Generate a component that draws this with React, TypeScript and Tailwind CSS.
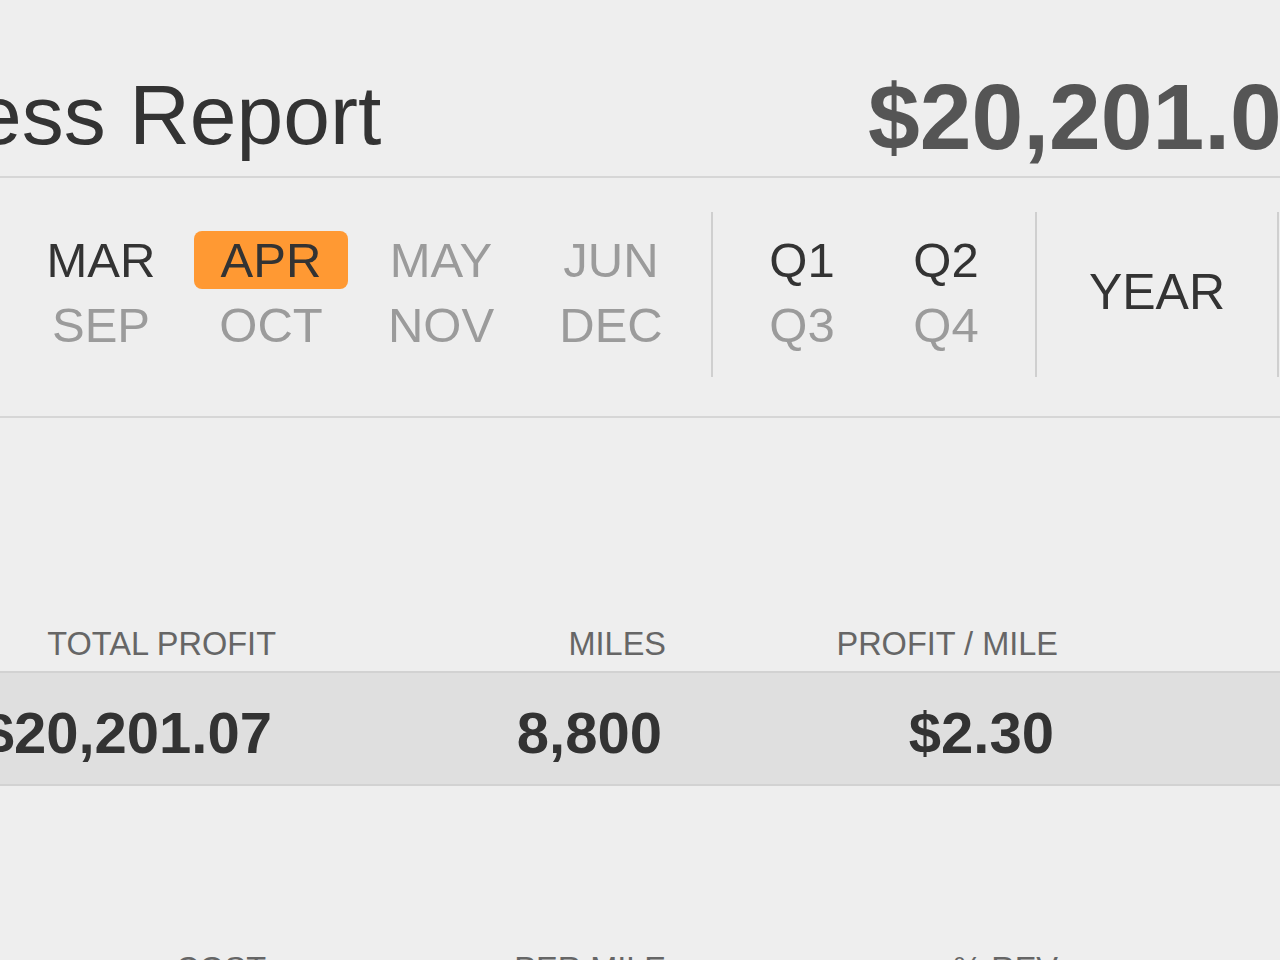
import React from 'react';

const monthRows = [
  ['JAN', 'FEB', 'MAR', 'APR', 'MAY', 'JUN'],
  ['JUL', 'AUG', 'SEP', 'OCT', 'NOV', 'DEC'],
];
const doneMonths = ['JAN', 'FEB', 'MAR', 'APR'];
const activeMonth = 'APR';

const quarterRows = [
  ['Q1', 'Q2'],
  ['Q3', 'Q4'],
];
const doneQuarters = ['Q1', 'Q2'];

const stats = [
  { label: 'TOTAL PROFIT', value: '$20,201.07' },
  { label: 'MILES', value: '8,800' },
  { label: 'PROFIT / MILE', value: '$2.30' },
];

const costLabels = ['COST', 'PER MILE', '% REV'];

function Cell({ label, done, active }: { label: string; done: boolean; active?: boolean }) {
  return (
    <div className="flex justify-center">
      <span
        className={`flex h-[58px] w-[154px] items-center justify-center rounded-[8px] text-[49px] leading-none ${
          active ? 'bg-[#ff9933] text-[#333]' : done ? 'text-[#333]' : 'text-[#9b9b9b]'
        }`}
      >
        {label}
      </span>
    </div>
  );
}

export default function App() {
  return (
    <div className="h-[960px] w-[1280px] overflow-hidden bg-[#eeeeee] font-['Liberation_Sans',Arial,sans-serif]">
      {/* page is wider than the window; shifted left like the capture */}
      <div className="ml-[-340px] w-[1800px]">
        {/* Header */}
        <header className="grid h-[178px] grid-cols-[1208px_auto] border-b-2 border-[#d6d6d6]">
          <h1 className="whitespace-nowrap pl-[105px] pt-[73px] text-[84px] font-normal leading-none text-[#333]">
            Business Report
          </h1>
          <div className="whitespace-nowrap pt-[71px] text-[93px] font-bold leading-none text-[#555]">
            $20,201.07
          </div>
        </header>

        {/* Period picker */}
        <section className="flex h-[240px] items-start border-b-2 border-[#d6d6d6] pt-[34px]">
          <div className="ml-[16px] mt-[19px] grid w-[1020px] grid-cols-6 gap-y-[7px]">
            {monthRows.flat().map((m) => (
              <Cell key={m} label={m} done={doneMonths.includes(m)} active={m === activeMonth} />
            ))}
          </div>

          <div className="ml-[15px] h-[165px] w-[2px] bg-[#cfcfcf]" />

          <div className="mt-[19px] grid w-[322px] grid-cols-[144px_144px] justify-center gap-y-[7px]">
            {quarterRows.flat().map((q) => (
              <div key={q} className="flex justify-center">
                <span
                  className={`flex h-[58px] items-center text-[49px] leading-none ${
                    doneQuarters.includes(q) ? 'text-[#333]' : 'text-[#9b9b9b]'
                  }`}
                >
                  {q}
                </span>
              </div>
            ))}
          </div>

          <div className="h-[165px] w-[2px] bg-[#cfcfcf]" />

          <div className="mt-[51px] flex h-[58px] w-[240px] items-center justify-center text-[50px] leading-none text-[#333]">
            YEAR
          </div>

          <div className="h-[165px] w-[2px] bg-[#cfcfcf]" />
        </section>

        {/* Profit summary */}
        <section className="mt-[210px]">
          <div className="grid h-[43px] grid-cols-[616px_390px_392px]">
            {stats.map((s) => (
              <div key={s.label} className="whitespace-nowrap text-right text-[32.5px] leading-none text-[#666]">
                {s.label}
              </div>
            ))}
          </div>
          <div className="grid h-[115px] grid-cols-[616px_390px_392px] border-y-2 border-[#d2d2d2] bg-[#dfdfdf] pt-[31px]">
            {stats.map((s) => (
              <div
                key={s.label}
                className="whitespace-nowrap pr-[4px] text-right text-[58px] font-bold leading-none text-[#333]"
              >
                {s.value}
              </div>
            ))}
          </div>
        </section>

        {/* Cost summary (cut off by the window) */}
        <section className="mt-[167px]">
          <div className="grid h-[43px] grid-cols-[616px_390px_392px]">
            {costLabels.map((l, i) => (
              <div
                key={l}
                className={`text-right text-[32.5px] leading-none text-[#666] ${i === 0 ? 'pr-[10px]' : ''}`}
              >
                {l}
              </div>
            ))}
          </div>
        </section>
      </div>
    </div>
  );
}
